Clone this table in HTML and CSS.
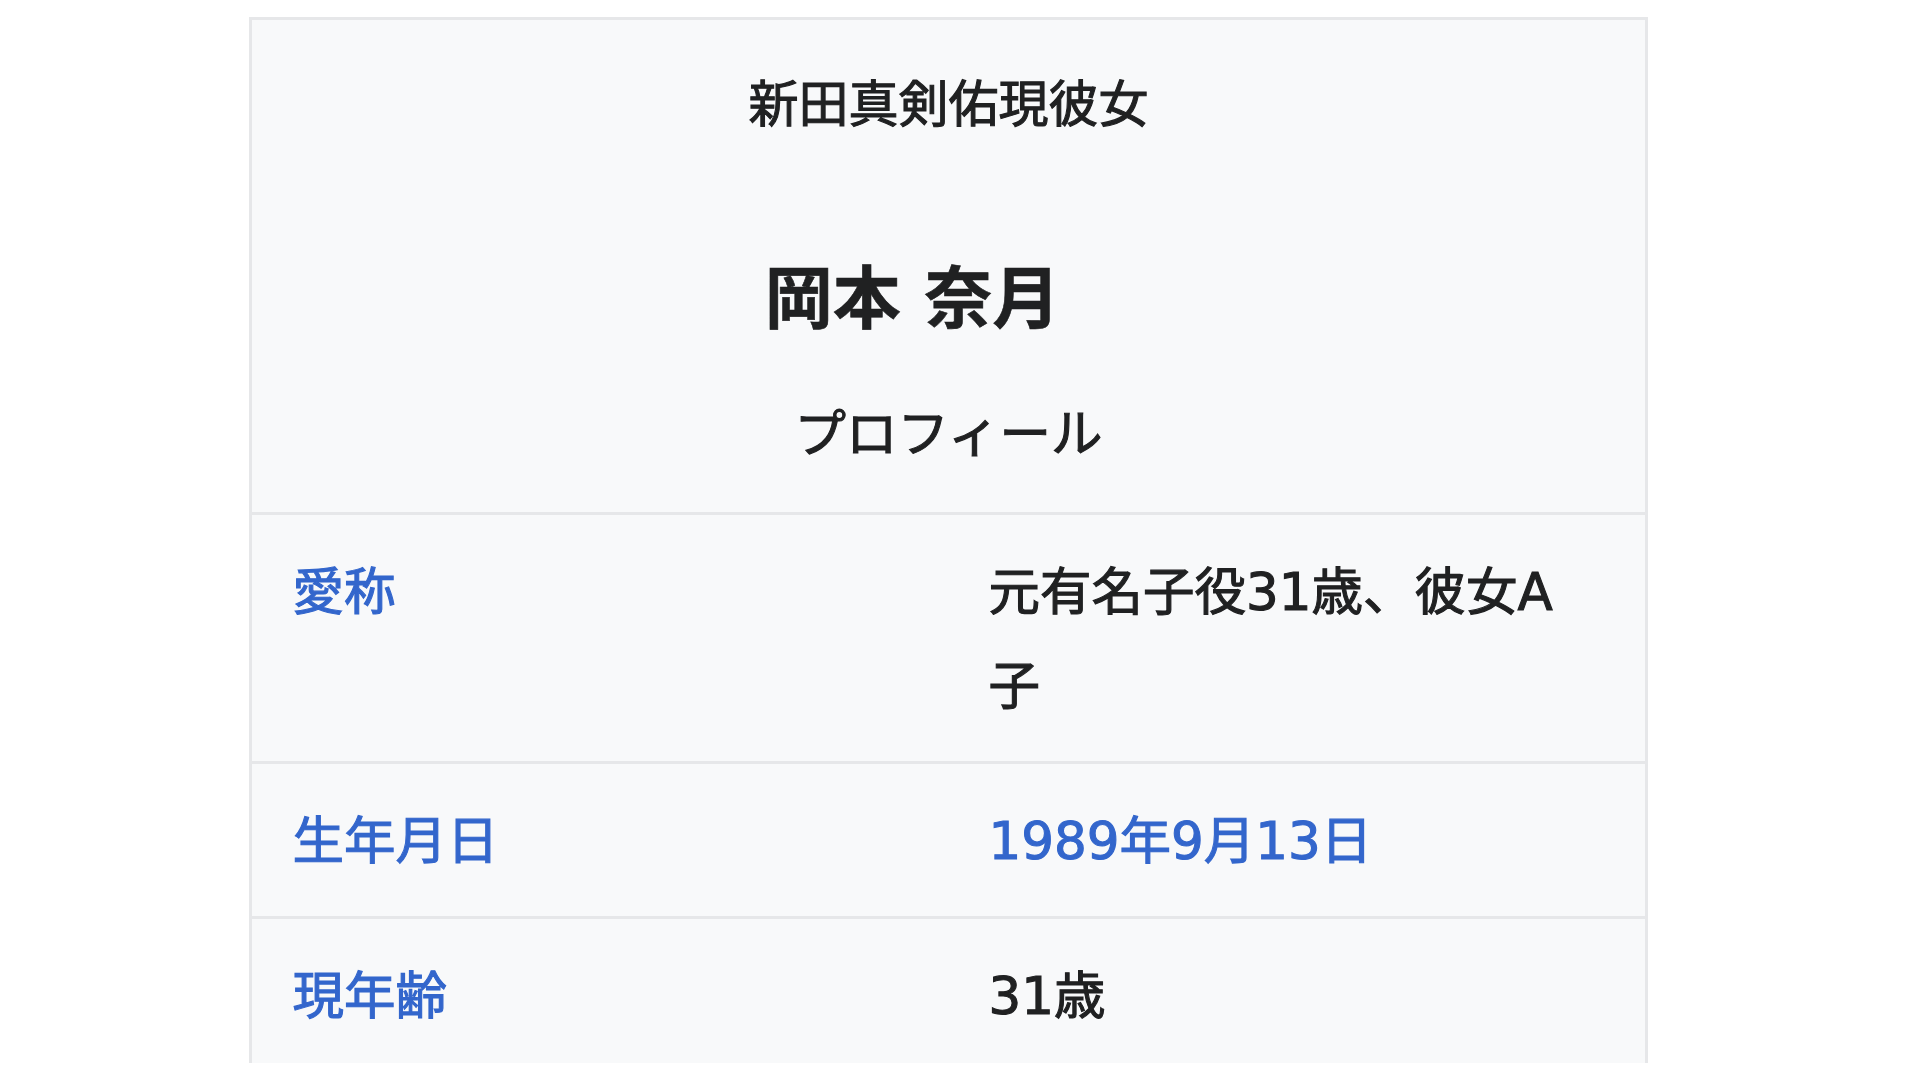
FILE: index.html
```html
<!DOCTYPE html>
<html lang="ja">
<head>
<meta charset="utf-8">
<title>岡本 奈月</title>
<link rel="stylesheet" href="styles.css">
</head>
<body>
<div class="infobox">
  <div class="header">
    <div class="caption">新田真剣佑現彼女</div>
    <div class="name"><span class="name-text">岡本 奈月</span></div>
    <div class="section">プロフィール</div>
  </div>
  <div class="row">
    <div class="label">愛称</div>
    <div class="value">元有名子役31歳、彼女A子</div>
  </div>
  <div class="row">
    <div class="label">生年月日</div>
    <div class="value link">1989年9月13日</div>
  </div>
  <div class="row">
    <div class="label">現年齢</div>
    <div class="value">31歳</div>
  </div>
</div>
</body>
</html>
```
FILE: styles.css
```css
html, body {
  margin: 0;
  padding: 0;
  background: #ffffff;
}

body {
  font-family: "DejaVu Sans", "Noto Sans CJK JP", sans-serif;
  color: #202122;
}

.infobox {
  box-sizing: border-box;
  margin: 17px 0 0 249px;
  width: 1399px;
  height: 1046px;
  overflow: hidden;
  background: #f8f9fa;
  border: 3px solid #e6e7e9;
  border-bottom: none;
}

.header {
  display: flex;
  flex-direction: column;
  align-items: center;
  padding: 50px 0 43px;
}

.caption {
  font-size: 50px;
  line-height: 70px;
  -webkit-text-stroke: 1.1px currentColor;
}

.name {
  margin-top: 115px;
  font-size: 68px;
  line-height: 90px;
  font-weight: 700;
  -webkit-text-stroke: 0.6px currentColor;
}

.name-text {
  display: inline-block;
  padding-right: 72px;
}

.section {
  margin-top: 54px;
  font-size: 51.5px;
  line-height: 70px;
  -webkit-text-stroke: 1.1px currentColor;
}

.row {
  display: grid;
  grid-template-columns: 1fr 1fr;
  border-top: 3px solid #e6e7e9;
}

.label,
.value {
  padding: 30px 60px 28px 40.5px;
  font-size: 51.5px;
  line-height: 94px;
  -webkit-text-stroke: 1.1px currentColor;
}

.label {
  color: #3366cc;
}

.value {
  padding-left: 40px;
}

.link {
  color: #3366cc;
}
```
